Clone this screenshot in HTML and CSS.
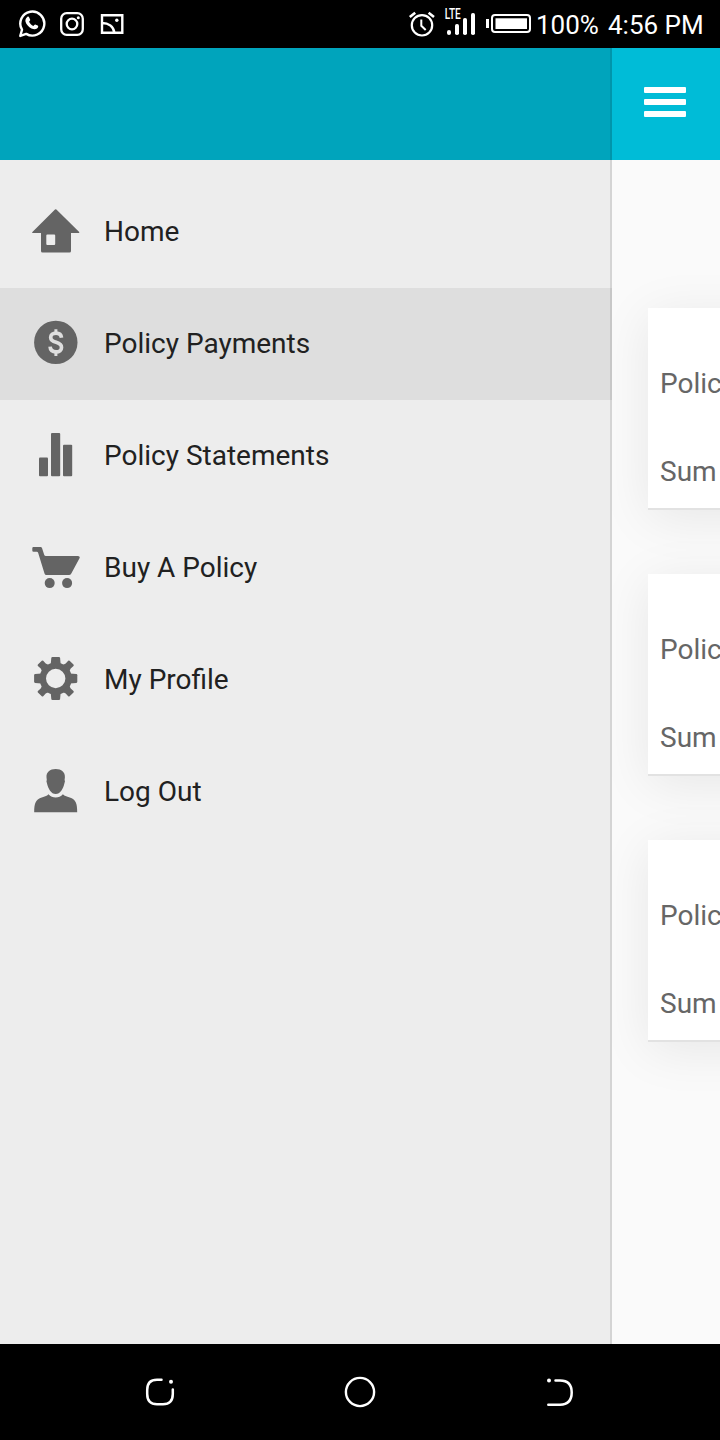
FILE: index.html
```html
<!DOCTYPE html>
<html lang="en">
<head>
<meta charset="utf-8">
<title>Policy Payments</title>
<link rel="stylesheet" href="styles.css">
</head>
<body>
<div class="screen">
  <header class="status">
    <div class="status-left">
      <svg width="28" height="28" viewBox="18.400 10.400 28 28"><path d="M20.700 36.300l1.700-6.200A12 12 0 1 1 26.600 34.300z" fill="none" stroke="#fff" stroke-width="2.400" stroke-linejoin="round"/><path d="M27.600 17.400c.8-.7 1.700-.4 2 .4l1 2.400c.2.6-.8 1.500-1.100 2 .8 1.900 2.300 3.300 4.300 4.100.6-.6 1.300-1.700 1.900-1.500l2.300 1.200c.8.4.7 1.200.3 2-1.200 2.200-4.300 1.900-6.500.8-2.700-1.300-5.200-4-5.900-6.700-.4-1.800.4-3.600 1.700-4.700z" fill="#fff"/></svg>
      <svg width="24" height="24" viewBox="0 0 24 24" fill="none" stroke="#fff"><rect x="1.200" y="1.200" width="21.600" height="21.600" rx="5.500" stroke-width="2.300"/><circle cx="12" cy="12" r="5.300" stroke-width="2.300"/><circle cx="18.300" cy="5.700" r="1.500" fill="#fff" stroke="none"/></svg>
      <svg width="24" height="20" viewBox="0 0 24 20" fill="none" stroke="#fff" stroke-width="2.400"><path d="M2 1.300h20.300v17.400H2zM2 9c6.500 0 11.500 3.500 12.500 10"/><circle cx="16.800" cy="6.300" r="1.700" fill="#fff" stroke="none"/></svg>
    </div>
    <div class="status-right">
      <svg class="alarm" width="28" height="28" viewBox="408 10 28 28" fill="none" stroke="#fff"><circle cx="422" cy="25.300" r="10.200" stroke-width="2.200"/><path d="M421.300 19.500v6.300l4.400 4.200" stroke-width="2"/><path d="M409.800 17l5.400-4.300M434 17l-5.400-4.300" stroke-width="2.600"/></svg>
      <div class="network">
        <span class="lte">LTE</span>
        <svg width="30" height="24" viewBox="446 12 30 24" fill="#fff"><rect x="447" y="30" width="4" height="5" rx="2"/><rect x="455" y="24" width="4" height="11" rx="1.800"/><rect x="463" y="18" width="4" height="17" rx="1.800"/><rect x="471" y="13" width="4" height="22" rx="1.800"/></svg>
      </div>
      <svg class="battery" width="46" height="20" viewBox="486 14 46 20"><rect x="486" y="19" width="3" height="9" fill="#fff"/><rect x="492" y="15" width="38" height="17" rx="3" fill="none" stroke="#fff" stroke-width="2"/><rect x="495.500" y="18.300" width="31.500" height="10.700" fill="#fff"/></svg>
      <span class="percent">100%</span>
      <span class="clock">4:56 PM</span>
    </div>
  </header>

  <div class="app">
    <aside class="drawer">
      <div class="drawer-head"></div>
      <nav class="menu">
        <a class="item">
          <svg class="icon" viewBox="0 0 48 48"><path fill-rule="evenodd" d="M23 1.500Q23.700.9 24.400 1.500L47.200 24.100Q47.600 25 46.800 25H39V43Q39 44.500 37.500 44.500H10.500Q9 44.500 9 43V25H.8Q-.2 25 .4 24.100zM15.300 26.500Q14.300 26.500 14.300 27.500V36Q14.300 37 15.300 37H22.200Q23.200 37 23.200 36V27.500Q23.200 26.500 22.200 26.500z"/></svg>
          <span>Home</span>
        </a>
        <a class="item active">
          <svg class="icon" viewBox="0 0 48 48"><circle cx="23.800" cy="22.400" r="21.700"/><path d="M29.500 17.800C29.200 14.700 27.200 13.200 24 13.200C20.900 13.200 18.700 14.800 18.700 17.400C18.700 20.200 21 21.300 24.200 22.300C27.500 23.300 29.500 24.600 29.500 27.400C29.500 30.200 27.300 31.900 24.100 31.900C20.500 31.900 18.300 30 18.100 26.700" fill="none" stroke="#dedede" stroke-width="3.700"/><path d="M23.900 9.300v4M23.900 32v4" fill="none" stroke="#dedede" stroke-width="3"/></svg>
          <span>Policy Payments</span>
        </a>
        <a class="item">
          <svg class="icon" viewBox="0 0 48 48"><rect x="7" y="25.400" width="9" height="18.800" rx="1"/><rect x="19" y="1" width="9.200" height="43.200" rx="1"/><rect x="31" y="12.700" width="9.200" height="31.500" rx="1"/></svg>
          <span>Policy Statements</span>
        </a>
        <a class="item">
          <svg class="icon" viewBox="0 0 48 48"><path d="M1.500 3H8.600Q9.600 3 10 4L12.200 10.800Q12.600 12 13.800 12H46Q48.400 12.300 47.500 14.300L39.300 29.500Q38.500 31 37 31H14.500Q13 31 12.500 29.500L6.200 9Q5.800 7.700 4.800 7.700H1.500Q.3 7.700.3 6.500V4.200Q.3 3 1.500 3z"/><circle cx="17.700" cy="39.100" r="5"/><circle cx="35.100" cy="39.100" r="5"/></svg>
          <span>Buy A Policy</span>
        </a>
        <a class="item">
          <svg class="icon" viewBox="0 0 48 48"><circle cx="23.700" cy="22.500" r="12.900" fill="none" stroke="#646464" stroke-width="6.400"/><g transform="translate(23.700 22.500)"><path id="tooth" d="M-5-14L-4.400-20.600Q-4.300-21.600-3.300-21.600H3.300Q4.300-21.600 4.400-20.600L5-14z"/><use href="#tooth" transform="rotate(90)"/><use href="#tooth" transform="rotate(180)"/><use href="#tooth" transform="rotate(270)"/><path id="cog" d="M6-13L10-15L12.500-17.800Q13.200-18.400 13.900-17.800L17.800-13.900Q18.400-13.200 17.800-12.500L15-10L13-6z"/><use href="#cog" transform="rotate(90)"/><use href="#cog" transform="rotate(180)"/><use href="#cog" transform="rotate(270)"/></g></svg>
          <span>My Profile</span>
        </a>
        <a class="item">
          <svg class="icon" viewBox="0 0 48 48"><path d="M23.700 1C29.500 1 33.200 4.200 32.900 9.200L32.600 12Q33.400 13 32.500 15C31.200 21 28.300 26 23.700 26S16.200 21 14.900 15Q14 13 14.800 12L14.500 9.200C14.200 4.200 17.900 1 23.700 1z"/><path d="M16.500 26.200Q19.500 29.500 23.700 29.500T30.900 26.200C32.500 28.200 35.500 28.600 38.500 29.700C43.500 31.400 45.200 35 45.200 44.200H2.200C2.200 35 4 31.400 9 29.700C12 28.600 15 28.200 16.500 26.200z"/></svg>
          <span>Log Out</span>
        </a>
      </nav>
    </aside>
    <main class="content">
      <div class="toolbar"><div class="burger"><i></i><i></i><i></i></div></div>
      <div class="cards">
        <section class="card"><p>Polic</p><p>Sum</p></section>
        <section class="card"><p>Polic</p><p>Sum</p></section>
        <section class="card"><p>Polic</p><p>Sum</p></section>
      </div>
    </main>
  </div>

  <footer class="navbar">
    <svg width="30" height="30" viewBox="145 1377 30 30" fill="none" stroke="#fff" stroke-width="2.500" stroke-linecap="round"><path d="M161.500 1379.800H157Q147.200 1379.800 147.200 1390V1394Q147.200 1404.200 157 1404.200H163Q172.800 1404.200 172.800 1394V1389.500"/><circle cx="171" cy="1381.800" r="2" fill="#fff" stroke="none"/></svg>
    <svg width="32" height="32" viewBox="0 0 32 32"><circle cx="16" cy="16" r="14.100" fill="none" stroke="#fff" stroke-width="2.400"/></svg>
    <svg width="30" height="30" viewBox="545 1377 30 30" fill="none" stroke="#fff" stroke-width="2.500" stroke-linecap="round"><path d="M555.500 1380.500H560Q571.700 1380.500 571.700 1392.500T560 1404.700H548.300"/><circle cx="549" cy="1380.500" r="2" fill="#fff" stroke="none"/></svg>
  </footer>
</div>
</body>
</html>
```
FILE: styles.css
```css
* { box-sizing: border-box; }
body { margin: 0; font-family: Roboto, sans-serif; }
.screen { width: 720px; height: 1440px; display: flex; flex-direction: column; overflow: hidden; background: #000; }

.status { height: 48px; flex: none; display: flex; justify-content: space-between; padding: 0 16px 0 18px; color: #fff; }
.status-left { display: flex; align-items: center; gap: 14px; }
.status-left svg:nth-child(3) { margin-left: 2px; }
.status-right { display: flex; align-items: flex-start; }
.alarm { margin-top: 10px; }
.network { width: 32px; margin-left: 8px; display: flex; flex-direction: column; }
.network svg { margin: -8px 0 0 2px; }
.lte { height: 20px; padding: 7px 0 0 1px; font-size: 14px; line-height: 15px; font-weight: 500; transform: scaleX(.72); transform-origin: 0 0; }
.battery { margin: 14px 0 0 10px; }
.percent, .clock { font-size: 26px; line-height: 51px; white-space: nowrap; }
.percent { width: 72px; margin-left: 4px; }
.clock { width: 96px; }

.app { height: 1296px; flex: none; display: flex; }
.drawer { width: 612px; flex: none; background: #ededed; border-right: 2px solid #d4d4d4; }
.drawer-head { height: 112px; width: 612px; background: #00a4bc; border-right: 2px solid #0095ab; }
.menu { padding-top: 16px; }
.item { width: 612px; height: 112px; display: flex; align-items: center; gap: 24px; padding-left: 32px; font-size: 28px; color: #212121; }
.item.active { background: #dedede; border-right: 2px solid #c7c7c7; }
.icon { width: 48px; height: 48px; flex: none; fill: #646464; }
.item span { line-height: 32px; }

.content { flex: 1; min-width: 0; background: #fafafa; overflow: hidden; }
.toolbar { height: 112px; background: #00bcd7; padding: 39px 0 0 32px; }
.burger { width: 42px; display: flex; flex-direction: column; gap: 6px; }
.burger i { height: 6px; border-radius: 1px; background: #fff; }
.cards { display: flex; flex-direction: column; gap: 64px; padding: 148px 0 0 36px; }
.card { width: 640px; height: 202px; padding: 48px 12px 0; background: #fff; border-bottom: 2px solid #e2e2e2; box-shadow: 0 8px 48px rgba(0, 0, 0, .08); }
.card p { height: 56px; margin: 0 0 32px; line-height: 56px; font-size: 28px; color: #666; }

.navbar { height: 96px; flex: none; display: flex; justify-content: space-between; align-items: center; padding: 0 145px; }
```
